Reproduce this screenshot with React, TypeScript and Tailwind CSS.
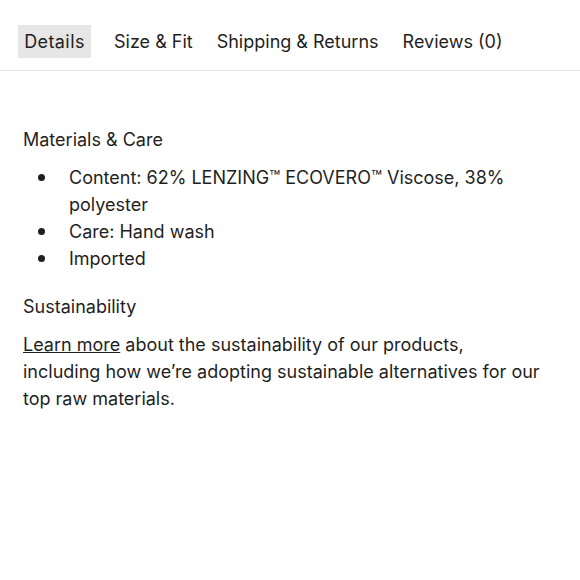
const tabs = ["Details", "Size & Fit", "Shipping & Returns", "Reviews (0)"];
const care = ["Content: 62% LENZING™ ECOVERO™ Viscose, 38% polyester", "Care: Hand wash", "Imported"];

export default function App() {
  return (
    <div className="min-h-[580px] w-[580px] bg-white text-[#1f1f1f] font-['Inter',sans-serif]">
      <div className="flex items-center gap-[12px] border-b border-[#e6e6e6] pl-[18px] pt-[25px] pb-[12px]">
        {tabs.map((t, i) => (
          <div
            key={t}
            className={`flex h-[33px] items-center px-[6px] text-[18px] ${
              i === 0 ? "mr-[5px] w-[73px] justify-center bg-[#e6e6e6] tracking-[0.4px]" : ""
            }`}
          >
            {t}
          </div>
        ))}
      </div>
      <div className="px-[23px] pt-[55px] text-[18px] leading-[27px]">
        <h3>Materials &amp; Care</h3>
        <ul className="mt-[11px]">
          {care.map((c) => (
            <li key={c} className="flex">
              <span className="flex h-[27px] w-[46px] shrink-0 items-center pl-[15px]">
                <span className="h-[7px] w-[7px] rounded-full bg-[#1f1f1f]" />
              </span>
              <span>{c}</span>
            </li>
          ))}
        </ul>
        <h3 className="mt-[21px]">Sustainability</h3>
        <p className="mt-[11px]">
          <a className="underline" href="#">Learn more</a> about the sustainability of our products,
          <br />
          including how we’re adopting sustainable alternatives for our top raw materials.
        </p>
      </div>
    </div>
  );
}
